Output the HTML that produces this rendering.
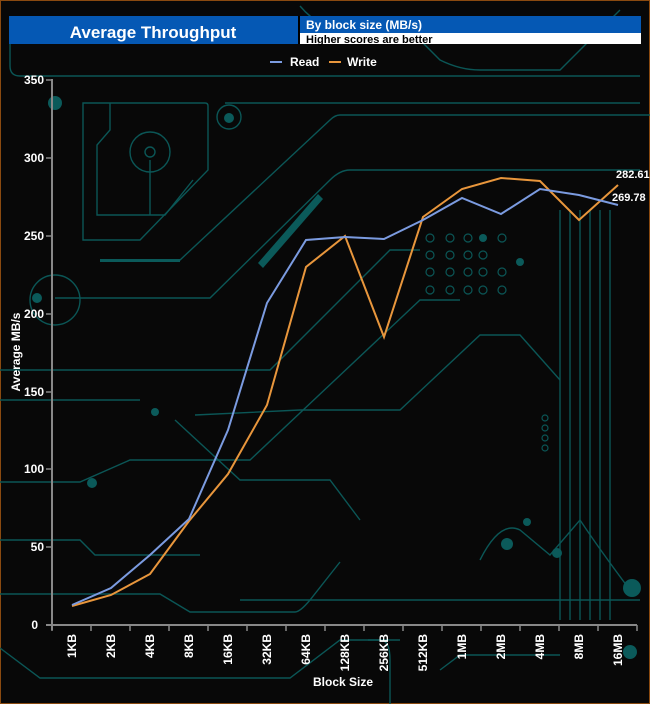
<!DOCTYPE html>
<html><head><meta charset="utf-8"><style>
html,body{margin:0;padding:0;background:#080808;}
body{width:650px;height:704px;overflow:hidden;position:relative;font-family:"Liberation Sans Narrow","Liberation Sans",Arial,sans-serif;}
svg text{font-family:"Liberation Sans Narrow","Liberation Sans",Arial,sans-serif;}
</style></head><body>
<svg width="650" height="704" xmlns="http://www.w3.org/2000/svg" style="position:absolute;left:0;top:0">
<rect x="0" y="0" width="650" height="704" fill="#080808"/>
<rect x="0.5" y="0.5" width="649" height="703" fill="none" stroke="#8a4a10" stroke-width="1"/>
<g fill="none" stroke="#0b5656" stroke-width="1.4">
<path d="M10 40 V66 Q10 76 20 76 H640"/>
<path d="M300 6 Q320 30 360 40 H420 L440 60 Q460 70 480 70 H560 L620 10"/>
<path d="M83 103 H205 Q208 103 208 106 V170 L140 240 H83 Z"/>
<path d="M110 103 V130 L97 145 V215 H165 L193 180"/>
<circle cx="150" cy="152" r="20"/><circle cx="150" cy="152" r="5"/><path d="M150 160 V215"/>
<circle cx="229" cy="117" r="12"/>
<path d="M225 103 H640"/>
<path d="M100 260 H180 L330 120 Q335 115 340 115 H650"/>
<path d="M55 298 H210 L330 180 Q340 170 350 170 H640"/>
<circle cx="55" cy="300" r="25"/>
<path d="M0 370 H270 L390 250 H420"/>
<path d="M0 400 H140"/>
<path d="M0 482 H80 L130 460 H250 L420 300 H460"/>
<path d="M0 540 H80 L95 555 H200"/>
<path d="M0 594 H160 L190 612 H295 Q300 612 310 600 L340 562"/>
<path d="M195 415 L300 410 H400 L480 335 H520 L560 380"/>
<path d="M175 420 L240 480 H330 L360 520"/>
<path d="M240 600 H640"/>
<path d="M0 648 L40 678 H290 L340 640 H400"/>
<path d="M440 670 L460 655 H560"/>
<path d="M560 210 V620 M570 210 V620 M580 210 V620 M590 210 V620 M600 210 V620 M610 210 V620"/>
<path d="M480 560 Q500 520 520 530 L550 555 L580 520 Q600 550 630 590"/>
<path d="M368 640 H380 Q390 640 390 660 V704"/>
</g>
<g fill="#0b5a5a">
<circle cx="55" cy="103" r="7"/><circle cx="229" cy="118" r="5"/><circle cx="37" cy="298" r="5"/>
<circle cx="92" cy="483" r="5"/><circle cx="155" cy="412" r="4"/><circle cx="507" cy="544" r="6"/>
<circle cx="557" cy="553" r="5"/><circle cx="527" cy="522" r="4"/><circle cx="632" cy="588" r="9"/>
<circle cx="630" cy="652" r="7"/><circle cx="483" cy="238" r="4"/><circle cx="520" cy="262" r="4"/>
<rect x="100" y="259" width="80" height="3"/>
<path d="M258 263 L318 194 L323 199 L263 268 Z"/>
</g>
<g fill="none" stroke="#0b5656" stroke-width="1.2">
<circle cx="430" cy="238" r="4"/><circle cx="450" cy="238" r="4"/><circle cx="468" cy="238" r="4"/><circle cx="502" cy="238" r="4"/>
<circle cx="430" cy="255" r="4"/><circle cx="450" cy="255" r="4"/><circle cx="468" cy="255" r="4"/><circle cx="483" cy="255" r="4"/>
<circle cx="430" cy="272" r="4"/><circle cx="450" cy="272" r="4"/><circle cx="468" cy="272" r="4"/><circle cx="483" cy="272" r="4"/><circle cx="502" cy="272" r="4"/>
<circle cx="430" cy="290" r="4"/><circle cx="450" cy="290" r="4"/><circle cx="468" cy="290" r="4"/><circle cx="483" cy="290" r="4"/><circle cx="502" cy="290" r="4"/>
<circle cx="545" cy="418" r="3"/><circle cx="545" cy="428" r="3"/><circle cx="545" cy="438" r="3"/><circle cx="545" cy="448" r="3"/>
</g>
<rect x="9" y="16" width="289" height="28" fill="#0558b4"/>
<text x="153" y="38" fill="#fff" font-size="17" font-weight="bold" text-anchor="middle">Average Throughput</text>
<rect x="300" y="16" width="341" height="17" fill="#0558b4"/>
<rect x="300" y="33" width="341" height="11" fill="#fff"/>
<rect x="298" y="16" width="2" height="28" fill="#000"/>
<text x="306" y="29" fill="#fff" font-size="12" font-weight="bold">By block size (MB/s)</text>
<text x="306" y="43" fill="#000" font-size="11" font-weight="bold">Higher scores are better</text>
<rect x="270" y="61" width="12" height="2" fill="#7b9be0"/>
<text x="290" y="66" fill="#fff" font-size="12" font-weight="bold">Read</text>
<rect x="329" y="61" width="12" height="2" fill="#e8963c"/>
<text x="347" y="66" fill="#fff" font-size="12" font-weight="bold">Write</text>
<g stroke="#888" stroke-width="2">
<line x1="52" y1="79" x2="52" y2="630"/>
<line x1="46" y1="625" x2="637" y2="625"/>
</g>
<g stroke="#888" stroke-width="1.5">
<line x1="46" y1="80" x2="52" y2="80"/><line x1="46" y1="158" x2="52" y2="158"/><line x1="46" y1="236" x2="52" y2="236"/>
<line x1="46" y1="314" x2="52" y2="314"/><line x1="46" y1="392" x2="52" y2="392"/><line x1="46" y1="469" x2="52" y2="469"/><line x1="46" y1="547" x2="52" y2="547"/>
<path d="M52 625v6M91 625v6M130 625v6M169 625v6M208 625v6M247 625v6M286 625v6M325 625v6M364 625v6M403 625v6M442 625v6M481 625v6M520 625v6M559 625v6M598 625v6M637 625v6"/>
</g>
<g fill="#fff" font-size="12" font-weight="bold" text-anchor="end">
<text x="44" y="84">350</text><text x="44" y="162">300</text><text x="44" y="240">250</text><text x="44" y="318">200</text>
<text x="44" y="396">150</text><text x="44" y="473">100</text><text x="44" y="551">50</text><text x="38" y="629">0</text>
</g>
<text transform="translate(20 352) rotate(-90)" fill="#fff" font-size="12" font-weight="bold" text-anchor="middle">Average MB/s</text>
<g fill="#fff" font-size="12" font-weight="bold" text-anchor="end">
<text transform="translate(76 634) rotate(-90)">1KB</text>
<text transform="translate(115 634) rotate(-90)">2KB</text>
<text transform="translate(154 634) rotate(-90)">4KB</text>
<text transform="translate(193 634) rotate(-90)">8KB</text>
<text transform="translate(232 634) rotate(-90)">16KB</text>
<text transform="translate(271 634) rotate(-90)">32KB</text>
<text transform="translate(310 634) rotate(-90)">64KB</text>
<text transform="translate(349 634) rotate(-90)">128KB</text>
<text transform="translate(388 634) rotate(-90)">256KB</text>
<text transform="translate(427 634) rotate(-90)">512KB</text>
<text transform="translate(466 634) rotate(-90)">1MB</text>
<text transform="translate(505 634) rotate(-90)">2MB</text>
<text transform="translate(544 634) rotate(-90)">4MB</text>
<text transform="translate(583 634) rotate(-90)">8MB</text>
<text transform="translate(622 634) rotate(-90)">16MB</text>
</g>
<text x="343" y="686" fill="#fff" font-size="12" font-weight="bold" text-anchor="middle">Block Size</text>
<polyline fill="none" stroke="#e8963c" stroke-width="2" points="72,606 111,595 150,574 189,521 228,474 267,405 306,267 345,236 384,337 423,217 462,189 501,178 540,181 579,220 618,185"/>
<polyline fill="none" stroke="#7b9be0" stroke-width="2" points="72,605 111,588 150,555 189,519 228,430 267,303 306,240 345,237 384,239 423,220 462,198 501,214 540,189 579,195 618,205"/>
<text x="616" y="178" fill="#fff" font-size="11" font-weight="bold">282.61</text>
<text x="612" y="201" fill="#fff" font-size="11" font-weight="bold">269.78</text>
</svg>
</body></html>
